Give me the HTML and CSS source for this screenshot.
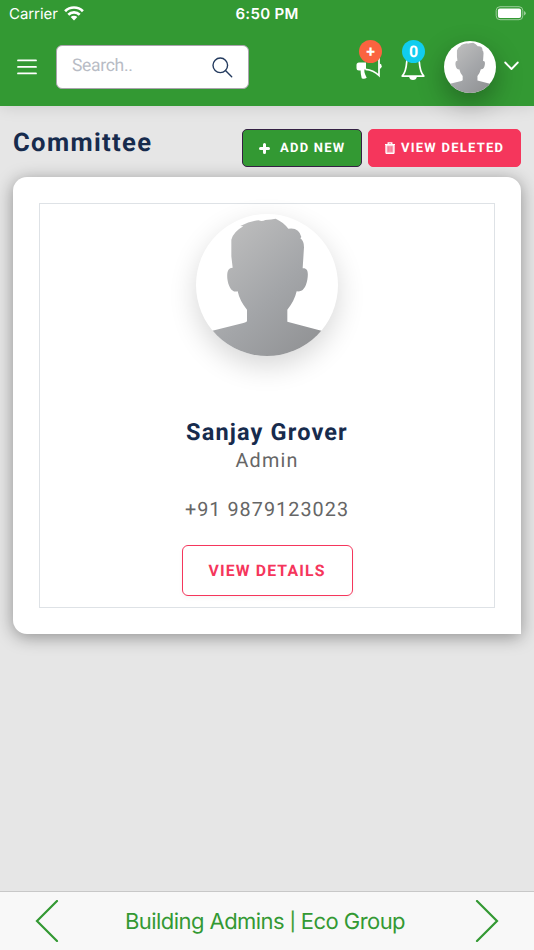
FILE: index.html
```html
<!DOCTYPE html>
<html lang="en">
<head>
<meta charset="utf-8">
<meta name="viewport" content="width=device-width, initial-scale=1">
<title>Committee</title>
<link rel="stylesheet" href="styles.css">
</head>
<body>
<svg class="defs" width="0" height="0" aria-hidden="true">
  <defs>
    <linearGradient id="skin" x1="0" y1="0" x2="1" y2="1"><stop offset="0.1" stop-color="#c0c0c0"/><stop offset="0.55" stop-color="#a3a5a8"/><stop offset="1" stop-color="#8b8c8e"/></linearGradient>
    <symbol id="person" viewBox="48 43 426 426">
      <path fill="url(#skin)" d="M48 407 L97 393 L190 370 Q201 367 201 363 V330 Q179 304 173 275 C155 280 145 260 142 237 C140 215 145 204 158 204 L154 170 V120 Q161 96 190 80 L181 79 Q209 64 236 62 Q246 66 256 61 Q275 59 287 57 Q310 67 325 87 Q357 82 364 112 L361 116 Q372 123 372 143 L368 206 C385 205 385 221 382 240 C377 266 367 277 350 275 Q343 305 322 330 V366 L424 393 L474 407 V469 H48 Z"/>
    </symbol>
  </defs>
</svg>
<header class="header">
  <div class="status">
    <div class="carrier"><span>Carrier</span>
      <svg width="20" height="15" viewBox="0 0 20 15"><g fill="none" stroke="#fff" stroke-width="2.7"><path d="M1.1 5.2a12.6 12.6 0 0 1 17.8 0"/><path d="M4.3 8.700a8 8 0 0 1 11.4 0"/></g><path fill="#fff" d="M6.700 11a4.700 4.700 0 0 1 6.600 0L10 14.500z"/></svg>
    </div>
    <div class="clock">6:50 PM</div>
    <svg class="battery" width="31" height="15" viewBox="0 0 31 15"><rect x="1.2" y=".7" width="26.6" height="13" rx="3.8" fill="none" stroke="#9bcd9a"/><rect x="2.900" y="2.4" width="23.2" height="9.6" rx="2" fill="#fff"/><path fill="#9bcd9a" d="M29 5q1.800 1 1.800 2.200T29 9.500z"/></svg>
  </div>
  <nav class="toolbar">
    <svg class="menu" width="20" height="16" viewBox="0 0 20 16"><path stroke="#fff" stroke-width="1.8" stroke-linecap="round" d="M1 1.400h18M1 7.900h18M1 14.400h18"/></svg>
    <div class="search"><span>Search..</span>
      <svg width="21" height="21" viewBox="0 0 21 21" fill="none" stroke="#233a5e" stroke-width="1.4" stroke-linecap="round"><circle cx="8.3" cy="8.3" r="7.3"/><path d="m13.500 13.500 6.200 6.200"/></svg>
    </div>
    <div class="alert horn">
      <svg width="28" height="24" viewBox="0 0 28 24" fill="none" stroke="#fff"><path fill="#fff" stroke="none" d="M.5 8Q.5 5.500 3 5.500H10v7H8.400q-.4 2.200.8 5l1.500 3.300q-2.400 1.700-5 .4Q4.600 17.500 4.600 13.500H3Q.5 13.500 .5 11z"/><path stroke-width="1.7" d="M9.500 12.300q8 .7 13.500 6.200V1"/><path fill="#fff" stroke="none" d="M23.500 6.500q2.200.4 2.200 2.700t-2.200 2.700z"/></svg>
      <b class="badge orange">+</b>
    </div>
    <div class="alert bell">
      <svg width="24" height="30" viewBox="0 0 24 30"><path fill="none" stroke="#fff" stroke-width="1.7" stroke-linejoin="round" d="M1.200 25.100Q5 21 5.700 11Q6 3 12 3T18.300 11Q19 21 22.800 25.100z"/><path fill="#fff" d="M8 25.500h8q-.7 3.500-4 3.500T8 25.500z"/></svg>
      <b class="badge cyan">0</b>
    </div>
    <div class="avatar small"><svg viewBox="0 0 52 52"><use href="#person" width="52" height="52"/></svg></div>
    <svg class="caret" width="15" height="10" viewBox="0 0 15 10"><path fill="none" stroke="#fff" stroke-width="1.8" stroke-linecap="round" stroke-linejoin="round" d="m1.200 1.500 6.300 6.500 6.300-6.500"/></svg>
  </nav>
</header>
<main class="page">
  <div class="heading">
    <h1>Committee</h1>
    <div class="actions">
      <button class="btn add"><svg width="11" height="11" viewBox="0 0 11 11"><path stroke="#fff" stroke-width="3" stroke-linecap="round" d="M5.500 1.500v8M1.500 5.500h8"/></svg><span>ADD NEW</span></button>
      <button class="btn remove"><svg width="10" height="12" viewBox="0 0 10 12"><path fill="none" stroke="#fff" stroke-width="1.3" d="M0 2.600h10M3.200 2.400V.8h3.600v1.600"/><rect x="1" y="2.800" width="8" height="8.700" rx="1" fill="#fbb0c0" stroke="#fff" stroke-width="1.3"/><path stroke="#f5365c" stroke-width=".6" d="M3.200 4.300v5.500M5 4.300v5.500M6.800 4.300v5.500"/></svg><span>VIEW DELETED</span></button>
    </div>
  </div>
  <section class="card">
    <article class="member">
      <div class="avatar large"><svg viewBox="0 0 142 142"><use href="#person" width="142" height="142"/></svg></div>
      <h2>Sanjay Grover</h2>
      <p class="role">Admin</p>
      <p class="phone">+91 9879123023</p>
      <button class="details">VIEW DETAILS</button>
    </article>
  </section>
</main>
<footer class="footer">
  <svg width="24" height="42" viewBox="0 0 24 42"><path d="M22 1 2 21l20 20"/></svg>
  <span class="site">Building Admins <span class="bar">|</span> Eco Group</span>
  <svg width="24" height="42" viewBox="0 0 24 42"><path d="m2 1 20 20L2 41"/></svg>
</footer>
</body>
</html>
```
FILE: styles.css
```css
* { box-sizing: border-box; }
body { margin: 0; height: 950px; display: flex; flex-direction: column; background: #e6e6e6; font-family: Roboto, sans-serif; overflow: hidden; text-rendering: geometricPrecision; }
h1, h2, p { margin: 0; }
svg { display: block; flex: none; }
button { text-rendering: geometricPrecision; }
.defs { position: absolute; }
.header { height: 106px; background: #339933; color: #fff; box-shadow: 0 0 16px rgba(0,0,0,.13); flex: none; }
.status { height: 27px; display: grid; grid-template-columns: 1fr auto 1fr; align-items: center; padding: 0 8px 0 9px; font: 15px/27px Inter, sans-serif; }
.carrier { display: flex; align-items: center; gap: 6px; }
.carrier span { width: 49px; letter-spacing: -.05px; }
.clock { font-weight: 600; font-size: 15px; letter-spacing: .3px; padding-right: 1px; }
.battery { justify-self: end; }
.toolbar { height: 79px; display: flex; align-items: center; padding-left: 17px; }
.menu { margin-right: 19px; }
.search { width: 193px; height: 44px; border: 1px solid #aaa4ad; border-radius: 6px; background: #fff; display: flex; align-items: center; justify-content: space-between; padding: 0 15px 0 15px; color: #b8bcc5; font-size: 17.500px; margin-right: 107px; margin-top: 1px; }
.search span { line-height: 41px; height: 42px; letter-spacing: -.3px; }
.search svg { margin-top: 1px; }
.alert { position: relative; height: 40px; display: flex; align-items: flex-end; flex: none; }
.horn { margin-right: 17px; width: 28px; }
.horn svg { margin-bottom: 6px; }
.bell { width: 24px; margin-right: 19px; }
.bell svg { margin-bottom: 6px; }
.badge { position: absolute; top: -6.500px; left: 50%; margin-left: -11px; width: 23px; height: 23px; border-radius: 50%; text-align: center; font-size: 16px; line-height: 23px; }
.orange { background: #fb6340; }
.cyan { background: #11cdef; }
.avatar { border-radius: 50%; background: #fff; flex: none; }
.avatar svg { width: 100%; height: 100%; border-radius: 50%; }
.small { width: 52px; height: 52px; box-shadow: 0 10px 28px rgba(0,0,0,.32); }
.caret { margin-left: 7.500px; margin-bottom: 2px; }
.page { padding: 0 13px; flex: 1; }
.heading { height: 71px; display: flex; justify-content: space-between; }
h1 { margin-top: 21px; font-size: 25.600px; line-height: 32px; letter-spacing: 1.350px; color: #172b4d; font-weight: 700; }
.actions { display: flex; gap: 6px; margin-top: 23px; }
.btn { height: 38px; border-radius: 5px; display: flex; align-items: center; color: #fff; font: 700 13px Roboto, sans-serif; letter-spacing: 1.250px; padding: 0 0 0 16px; white-space: nowrap; }
.btn span { padding-top: 1px; }
.add { width: 120px; background: #339933; border: 1px solid #352044; gap: 10px; }
.remove { width: 153px; background: #f5365c; border: 1px solid #f5365c; gap: 6px; }
.card { height: 457px; background: #fff; border-radius: 14px 14px 0 14px; padding: 26px; box-shadow: 0 3px 17px rgba(0,0,0,.38); }
.member { height: 405px; border: 1px solid #dee2e6; display: flex; flex-direction: column; align-items: center; }
.large { width: 142px; height: 142px; margin-top: 10px; box-shadow: 0 10px 28px rgba(0,0,0,.16); }
h2 { margin-top: 60px; font-size: 23.500px; line-height: 32px; letter-spacing: 1.150px; color: #172b4d; }
.role, .phone { font-size: 19.800px; line-height: 26px; letter-spacing: 1.200px; color: #666; }
.phone { margin-top: 23px; letter-spacing: 1.050px; }
.details { margin-top: 22px; width: 171px; height: 51px; border: 1px solid #f5365c; border-radius: 6px; background: #fff; color: #f5365c; font: 700 15.800px Roboto, sans-serif; letter-spacing: 1.150px; padding: 0; flex: none; box-shadow: 0 2px 5px rgba(0,0,0,.04); }
.footer { height: 59px; background: #f8f8f8; border-top: 1px solid #c8c8c8; display: flex; align-items: center; justify-content: space-between; padding: 0 35px; color: #339933; font: 22px Inter, sans-serif; flex: none; }
.site { letter-spacing: -.55px; padding: 2px 4px 0 0; }
.bar { font-size: 18px; position: relative; top: -1px; -webkit-text-stroke: .3px #339933; }
.footer path { fill: none; stroke: #339933; stroke-width: 2.200; stroke-linecap: round; }
```
